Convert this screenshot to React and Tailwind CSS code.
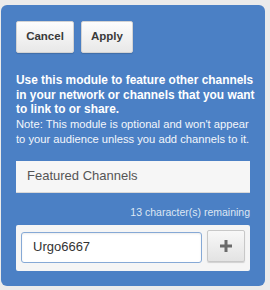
import React from 'react';

const font = { fontFamily: '"Liberation Sans", Arial, sans-serif' };

const Button = ({ children, className = '' }) => (
  <button
    className={`h-[32px] rounded-[2px] border border-[#d3d3d3] bg-gradient-to-b from-[#fdfdfd] to-[#e8e8e8] text-[11.5px] font-bold text-[#3a3a3a] shadow-[0_1px_1px_rgba(0,0,0,0.15)] ${className}`}
  >
    {children}
  </button>
);

const PlusIcon = () => (
  <svg width="12" height="12" viewBox="0 0 12 12">
    <path d="M4.5 0h3v4.5H12v3H7.5V12h-3V7.5H0v-3h4.5z" fill="#6b6b6b" />
  </svg>
);

export default function App() {
  return (
    <div className="h-[290px] w-[270px] bg-[#ebebeb] pl-[1px] pt-[5px]" style={font}>
      <div className="flex h-[281px] w-[264px] flex-col rounded-[6px] bg-[#4b80c5] px-[15px] pt-[16px]">
        <div className="flex gap-[7px]">
          <Button className="w-[58px]">Cancel</Button>
          <Button className="w-[52px]">Apply</Button>
        </div>

        <p className="mt-[20px] whitespace-nowrap text-[11.9px] font-bold leading-[14.5px] text-white">
          Use this module to feature other channels
          <br />
          in your network or channels that you want
          <br />
          to link to or share.
        </p>
        <p className="whitespace-nowrap text-[11.2px] leading-[15px] text-[#f3f6fb]">
          Note: This module is optional and won't appear
          <br />
          to your audience unless you add channels to it.
        </p>

        <div className="mt-[14px] flex h-[32px] items-center border-b border-[#d8d8d8] bg-[#f6f6f6] pl-[11px] text-[13px] text-[#555]">
          Featured Channels
        </div>
        <div className="mt-[12px] text-right text-[10.5px] leading-[14px] text-[#dde7f4]">
          13 character(s) remaining
        </div>

        <div className="mt-[6px] flex h-[46px] items-start gap-[5px] rounded-[2px] bg-[#f5f5f5] pl-[5px] pt-[5px]">
          <div className="mt-[2px] flex h-[31px] w-[181px] items-center rounded-[3px] border border-[#86a9d6] bg-white pl-[11px] text-[13px] text-[#333] shadow-[inset_0_1px_2px_rgba(0,0,0,0.08)]">
            Urgo6667
          </div>
          <button className="flex h-[32px] w-[38px] items-center justify-center rounded-[2px] border border-[#c8c8c8] bg-gradient-to-b from-[#f8f8f8] to-[#e3e3e3] shadow-[0_1px_1px_rgba(0,0,0,0.15)]">
            <PlusIcon />
          </button>
        </div>
      </div>
    </div>
  );
}
